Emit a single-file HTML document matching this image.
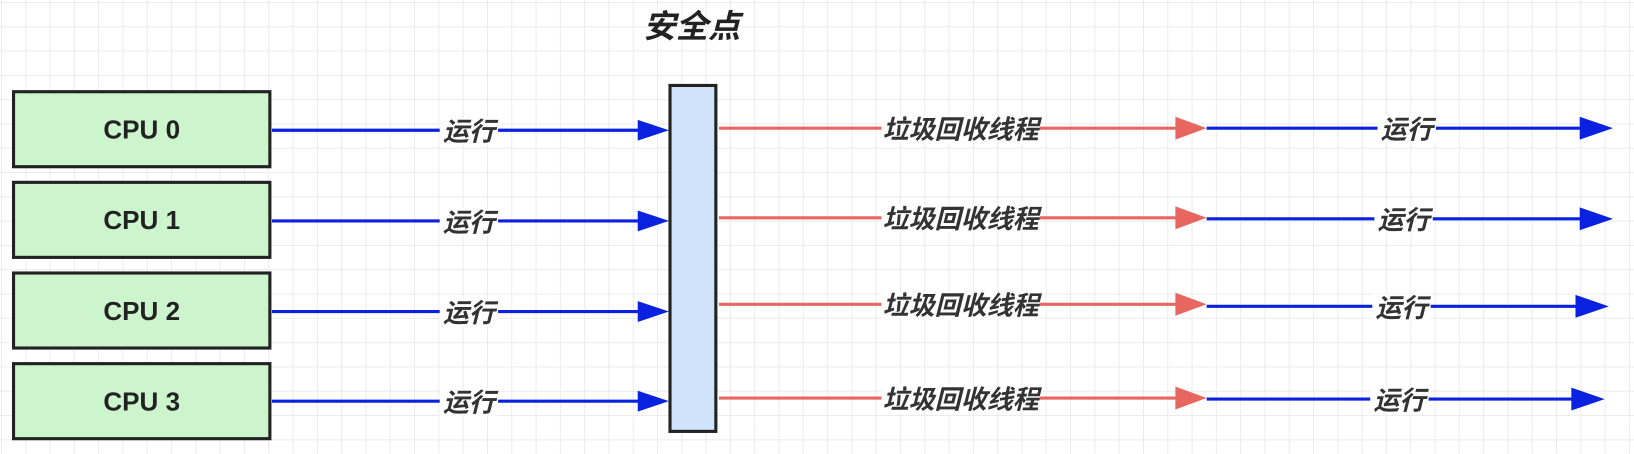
<!DOCTYPE html>
<html><head><meta charset="utf-8"><style>
html,body{margin:0;padding:0;width:1634px;height:454px;overflow:hidden;background:#fff}
body{background-image:linear-gradient(#ebebeb 1px,transparent 1px),linear-gradient(90deg,#ebebeb 1px,transparent 1px);background-size:24.3px 24.3px;background-position:1px 2px}
</style></head><body>
<svg width="1634" height="454" style="position:absolute;left:0;top:0" font-family="Liberation Sans, Noto Sans CJK SC, sans-serif">
<g transform="scale(1.042)">
<g stroke="#222" stroke-width="3" fill="#cdf5cd">
<rect x="13" y="88" width="246" height="72"/>
<rect x="13" y="175" width="246" height="72"/>
<rect x="13" y="262" width="246" height="72"/>
<rect x="13" y="349" width="246" height="72"/>
</g>
<rect x="643" y="82" width="44" height="332" fill="#cfe4fa" stroke="#222" stroke-width="3"/>
<g font-weight="bold" font-size="25" fill="#222" text-anchor="middle">
<text x="136" y="133">CPU 0</text><text x="136" y="220">CPU 1</text><text x="136" y="307">CPU 2</text><text x="136" y="394">CPU 3</text>
</g>
<text x="664" y="36" font-size="31" font-weight="bold" font-style="italic" fill="#222" text-anchor="middle">安全点</text>
<g stroke-width="3">
<g stroke="#0a22e0" fill="#0a22e0">
<line x1="261" y1="125" x2="615" y2="125"/><path d="M612 115L642 125L612 135z" stroke="none"/>
<line x1="261" y1="212" x2="615" y2="212"/><path d="M612 202L642 212L612 222z" stroke="none"/>
<line x1="261" y1="299" x2="615" y2="299"/><path d="M612 289L642 299L612 309z" stroke="none"/>
<line x1="261" y1="385" x2="615" y2="385"/><path d="M612 375L642 385L612 395z" stroke="none"/>
<line x1="1158" y1="123" x2="1520" y2="123"/><path d="M1516 112L1548 123L1516 134z" stroke="none"/>
<line x1="1158" y1="210" x2="1520" y2="210"/><path d="M1516 199L1548 210L1516 221z" stroke="none"/>
<line x1="1158" y1="294" x2="1515" y2="294"/><path d="M1512 283L1544 294L1512 305z" stroke="none"/>
<line x1="1158" y1="383" x2="1512" y2="383"/><path d="M1508 372L1540 383L1508 394z" stroke="none"/>
</g>
<g stroke="#e86660" fill="#e86660">
<line x1="690" y1="123" x2="1132" y2="123"/><path d="M1128 112L1158 123L1128 134z" stroke="none"/>
<line x1="690" y1="209" x2="1132" y2="209"/><path d="M1128 198L1158 209L1128 220z" stroke="none"/>
<line x1="690" y1="292" x2="1132" y2="292"/><path d="M1128 281L1158 292L1128 303z" stroke="none"/>
<line x1="690" y1="382" x2="1132" y2="382"/><path d="M1128 371L1158 382L1128 393z" stroke="none"/>
</g>
</g>
<g fill="#fff">
<rect x="422" y="113" width="56" height="26"/><rect x="422" y="200" width="56" height="26"/><rect x="422" y="287" width="56" height="26"/><rect x="422" y="373" width="56" height="26"/>
<rect x="846" y="111" width="152" height="26"/><rect x="846" y="197" width="152" height="26"/><rect x="846" y="280" width="152" height="26"/><rect x="846" y="370" width="152" height="26"/>
<rect x="1322" y="111" width="56" height="26"/><rect x="1319" y="198" width="56" height="26"/><rect x="1317" y="282" width="56" height="26"/><rect x="1315" y="371" width="56" height="26"/>
</g>
<g font-size="25" font-weight="bold" font-style="italic" fill="#333" text-anchor="middle">
<text x="450" y="135">运行</text><text x="450" y="222">运行</text><text x="450" y="309">运行</text><text x="450" y="395">运行</text>
<text x="922" y="133">垃圾回收线程</text><text x="922" y="219">垃圾回收线程</text><text x="922" y="302">垃圾回收线程</text><text x="922" y="392">垃圾回收线程</text>
<text x="1350" y="133">运行</text><text x="1347" y="220">运行</text><text x="1345" y="304">运行</text><text x="1343" y="393">运行</text>
</g>
</g>
</svg>
</body></html>
